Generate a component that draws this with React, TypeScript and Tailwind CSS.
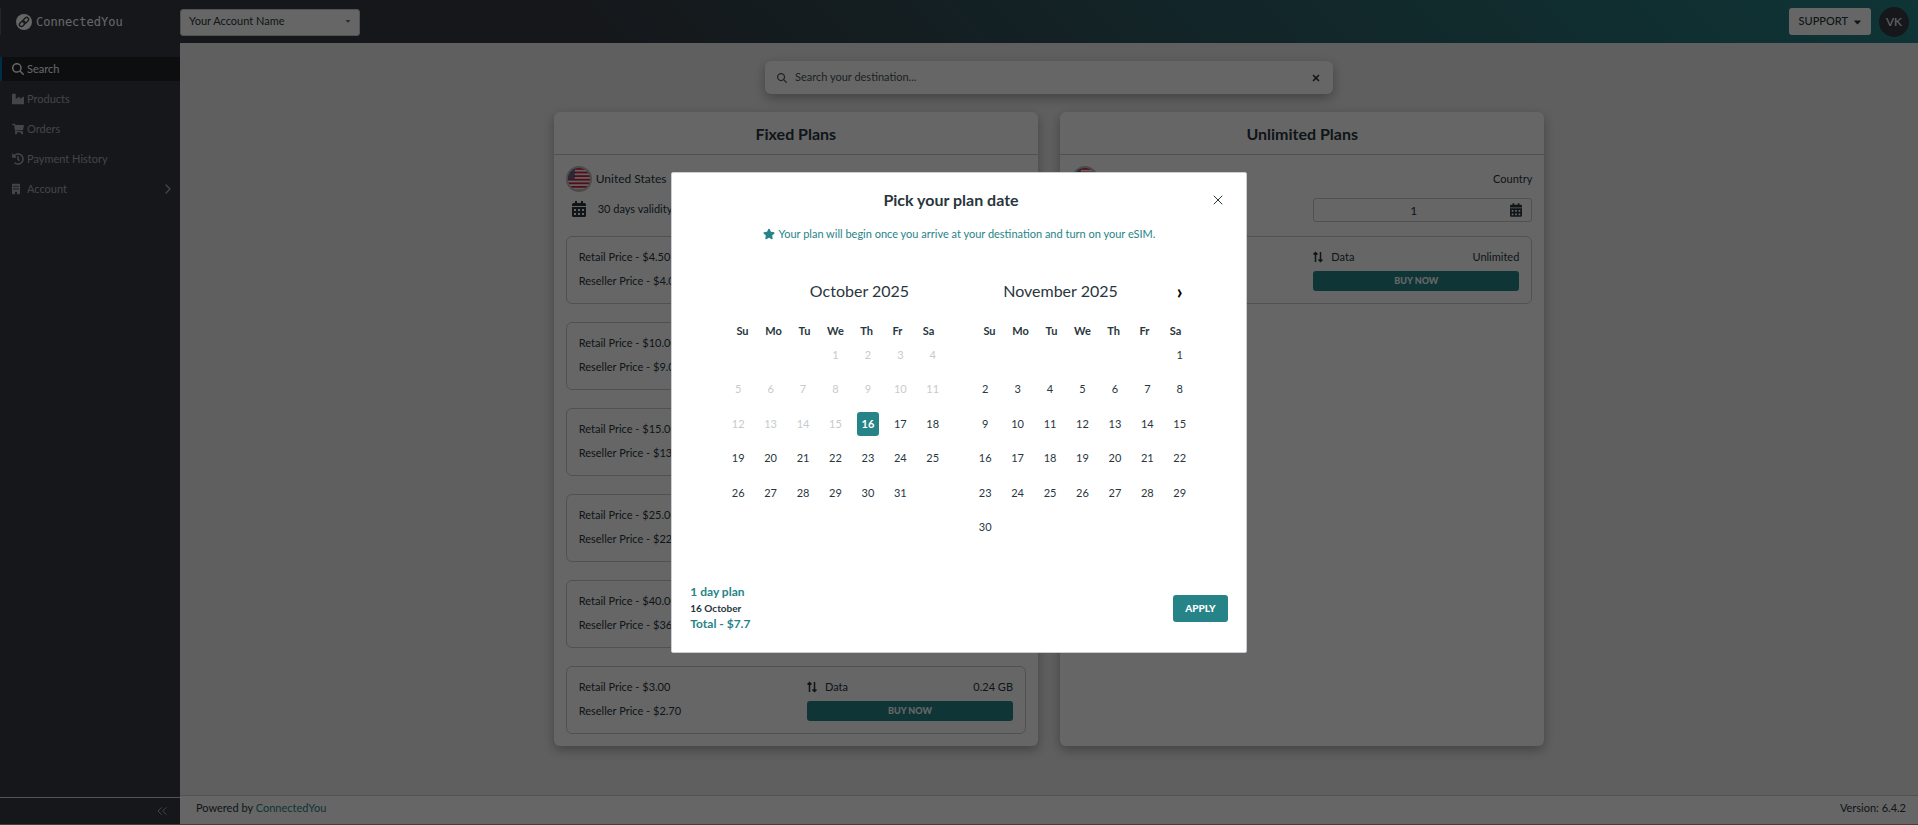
import { useState } from "react";
import { FaCaretDown, FaHistory, FaIndustry, FaShoppingCart, FaStar } from "react-icons/fa";
import { FaBuilding, FaMagnifyingGlass } from "react-icons/fa6";
import { ChevronRight, ChevronsLeft, X } from "lucide-react";
import clsx from "clsx";

const navItems = [
  { label: "Search", icon: FaMagnifyingGlass, active: true },
  { label: "Products", icon: FaIndustry },
  { label: "Orders", icon: FaShoppingCart },
  { label: "Payment History", icon: FaHistory },
  { label: "Account", icon: FaBuilding, expandable: true },
];

const fixedPlans = [
  { retail: "$4.50", reseller: "$4.05", data: "1 GB" },
  { retail: "$10.00", reseller: "$9.00", data: "3 GB" },
  { retail: "$15.00", reseller: "$13.50", data: "5 GB" },
  { retail: "$25.00", reseller: "$22.50", data: "10 GB" },
  { retail: "$40.00", reseller: "$36.00", data: "20 GB" },
  { retail: "$3.00", reseller: "$2.70", data: "0.24 GB" },
];

const weekDays = ["Su", "Mo", "Tu", "We", "Th", "Fr", "Sa"];

function Logo() {
  return (
    <svg viewBox="0 0 16 16" className="size-4" fill="none" aria-hidden="true">
      <circle cx="8" cy="8" r="8" fill="#fff" />
      <g transform="rotate(-45 8 8)" stroke="#363a43" strokeWidth="1.3">
        <rect x="2.3" y="6" width="6.4" height="4" rx="2" />
        <rect x="7.3" y="6" width="6.4" height="4" rx="2" />
      </g>
    </svg>
  );
}

function CalendarIcon({ className }: { className?: string }) {
  return (
    <svg viewBox="0 0 14 16" className={className} fill="currentColor" aria-hidden="true">
      <path
        fillRule="evenodd"
        d="M3 0h2v2h4V0h2v2h1.5A1.5 1.5 0 0 1 14 3.5V5H0V3.5A1.5 1.5 0 0 1 1.5 2H3zM0 6h14v8.500a1.500 1.500 0 0 1-1.500 1.500h-11A1.500 1.500 0 0 1 0 14.500zM2 8v2h2V8zm4 0v2h2V8zm4 0v2h2V8zM2 12v2h2v-2zm4 0v2h2v-2zm4 0v2h2v-2z"
      />
    </svg>
  );
}

function DataIcon() {
  return (
    <svg viewBox="0 0 10 12" className="h-3 w-2.5" fill="none" stroke="currentColor" strokeWidth="1.5" aria-hidden="true">
      <path d="M2.500 11V1.500M.5 3.500l2-2 2 2M7.500 1v9.500M5.500 8.500l2 2 2-2" />
    </svg>
  );
}

function UsFlag() {
  return (
    <svg viewBox="0 0 26 26" className="size-[26px] shrink-0" role="img" aria-label="United States flag">
      <defs>
        <clipPath id="flag">
          <circle cx="13" cy="13" r="11" />
        </clipPath>
      </defs>
      <circle cx="13" cy="13" r="13" fill="#bcbcbf" />
      <g clipPath="url(#flag)">
        <rect width="26" height="26" fill="#f4f4f4" />
        {[2, 5.6, 9.2, 12.8, 16.4, 20, 23.6].map((y) => (
          <rect key={y} y={y} width="26" height="1.8" fill="#d0223c" />
        ))}
        <rect width="8.500" height="13" fill="#33346b" />
        {[4, 6, 8, 10, 12].map((y) => (
          <path key={y} d={`M2.500 ${y}h5`} stroke="#f4f4f4" strokeDasharray="1 1" />
        ))}
      </g>
    </svg>
  );
}

function PlanBox({ retail, reseller, data }: { retail: string; reseller: string; data: string }) {
  return (
    <div className="grid h-[68px] grid-cols-[1fr_206px] gap-x-4 rounded-md border border-[#c8cacc] px-3 text-[11px] leading-4">
      <div className="flex flex-col gap-2 pt-3">
        <p>Retail Price - {retail}</p>
        <p>Reseller Price - {reseller}</p>
      </div>
      <div className="flex flex-col gap-1.5 pt-3">
        <div className="flex items-center">
          <DataIcon />
          <span className="ml-2">Data</span>
          <span className="ml-auto">{data}</span>
        </div>
        <button className="h-5 rounded-[3px] bg-[#268488] text-[9px] leading-4 font-black text-white">BUY NOW</button>
      </div>
    </div>
  );
}

interface MonthProps {
  title: string;
  titleClassName: string;
  offset: number;
  days: number;
  disabledUntil?: number;
  selected?: number;
  onSelect: (day: number) => void;
}

function Month({ title, titleClassName, offset, days, disabledUntil = 0, selected, onSelect }: MonthProps) {
  return (
    <section className="w-[227px]">
      <h3 className={clsx("text-center text-base leading-6", titleClassName)}>{title}</h3>
      <div className="mt-5 grid grid-cols-[repeat(7,31px)] justify-center text-center text-[11px] leading-4 font-bold">
        {weekDays.map((day) => (
          <span key={day}>{day}</span>
        ))}
      </div>
      <div className="grid h-[207px] grid-cols-7 grid-rows-6 justify-items-center text-[11px]">
        {Array.from({ length: offset }, (_, i) => (
          <span key={`empty-${i}`} />
        ))}
        {Array.from({ length: days }, (_, i) => i + 1).map((day) => (
          <button
            key={day}
            disabled={day <= disabledUntil}
            onClick={() => onSelect(day)}
            className={clsx(
              "mt-1 h-6 w-[22px] rounded-[3px]",
              day <= disabledUntil && "text-[#c8cacc]",
              day === selected && "bg-[#268488] font-bold text-white"
            )}
          >
            {day}
          </button>
        ))}
      </div>
    </section>
  );
}

function PlanDateDialog() {
  const [day, setDay] = useState(16);

  return (
    <div className="fixed inset-0 z-20 flex items-center justify-center bg-black/60">
      <div
        role="dialog"
        aria-modal="true"
        aria-labelledby="dialog-title"
        className="w-[30%] min-w-[560px] rounded-xs border border-[#c8ced3] bg-white text-[#29363d]"
      >
        <header className="flex items-center px-5 pt-[15px]">
          <h2 id="dialog-title" className="flex-1 text-center text-base leading-6 font-bold">
            Pick your plan date
          </h2>
          <button aria-label="Close">
            <X className="size-4" strokeWidth={1.5} />
          </button>
        </header>
        <p className="mt-3 flex items-center justify-center gap-1 text-[11px] leading-5 text-[#268488]">
          <FaStar className="size-3" />
          Your plan will begin once you arrive at your destination and turn on your eSIM.
        </p>
        <div className="relative mt-[35px] flex justify-center gap-5">
          <Month
            title="October 2025"
            titleClassName="pl-12"
            offset={3}
            days={31}
            disabledUntil={15}
            selected={day}
            onSelect={setDay}
          />
          <Month title="November 2025" titleClassName="pr-11" offset={6} days={30} onSelect={() => {}} />
          <button aria-label="Next month" className="absolute top-0 right-14 w-5 text-xl leading-6 font-bold text-black">
            ›
          </button>
        </div>
        <footer className="flex items-center justify-between px-[18px] pt-[38px] pb-5">
          <div className="font-bold">
            <p className="text-xs leading-4 text-[#268488]">1 day plan</p>
            <p className="text-[10px] leading-4">{day} October</p>
            <p className="text-xs leading-4 text-[#268488]">Total - $7.7</p>
          </div>
          <button className="h-[27px] rounded-[3px] bg-[#268488] px-3 text-[10px] font-black text-white">APPLY</button>
        </footer>
      </div>
    </div>
  );
}

export default function App() {
  return (
    <div className="flex min-h-screen flex-col border-b border-[#a0a0a0] bg-[#eeeeee] font-['Lato',sans-serif] text-[#29363d]">
      <header className="flex h-[43px] items-center bg-[linear-gradient(45deg,#363a43_30%,#268488)] pr-[9px]">
        <a href="#" className="flex h-[27px] w-[180px] items-center gap-1 border-l border-[#4d6468] pl-[15px] text-white">
          <Logo />
          <span className="font-['DejaVu_Sans_Mono',monospace] text-xs">ConnectedYou</span>
        </a>
        <div className="relative w-[180px]">
          <select
            aria-label="Account"
            className="h-[27px] w-full appearance-none rounded-[3px] border border-[#c8ced3] bg-white px-2 pb-0.5 text-[11px]"
          >
            <option>Your Account Name</option>
          </select>
          <FaCaretDown className="pointer-events-none absolute top-2.5 right-2 size-2 text-gray-500" />
        </div>
        <button className="ml-auto flex h-[27px] items-center gap-1.5 rounded-[3px] bg-white px-2.5 text-[11px] font-medium">
          SUPPORT
          <FaCaretDown className="h-3 w-[7px]" />
        </button>
        <button className="ml-2 size-[30px] rounded-full bg-[#363a43] text-xs text-white">VK</button>
      </header>

      <div className="flex flex-1">
        <aside className="flex w-[180px] shrink-0 flex-col bg-[#363a43] text-[11px]">
          <nav className="flex flex-col gap-1.5 pt-3.5">
            {navItems.map(({ label, icon: Icon, active, expandable }) => (
              <a
                key={label}
                href="#"
                className={clsx(
                  "flex h-6 items-center gap-[3px] border-l-2 pr-1 pl-2.5",
                  active ? "border-[#0072b1] bg-[#212326] text-white" : "border-transparent text-[#a9acb2]"
                )}
              >
                <Icon className={expandable ? "mr-1 h-3 w-2" : "size-3"} />
                {label}
                {expandable && <ChevronRight className="ml-auto size-4" />}
              </a>
            ))}
          </nav>
          <button
            aria-label="Collapse sidebar"
            className="mt-auto flex h-[27px] items-center justify-end border-t border-[#d0d0d0] pr-2.5 text-[#a9acb2]"
          >
            <ChevronsLeft className="size-4" strokeWidth={1.5} />
          </button>
        </aside>

        <div className="flex min-w-0 flex-1 flex-col">
          <main className="mx-auto flex w-[57%] min-w-[900px] flex-1 flex-col items-center pt-[18px]">
            <label className="flex h-[33px] w-[568px] items-center rounded-md bg-white px-3 shadow-[0_4px_12px_rgba(0,0,0,0.3)]">
              <FaMagnifyingGlass className="size-2.5 shrink-0 text-[#4a5359]" />
              <span className="sr-only">Destination</span>
              <input
                placeholder="Search your destination..."
                className="ml-2 flex-1 text-[11px] outline-none placeholder:text-[#4a5359]"
              />
              <button aria-label="Clear">
                <X className="size-2.5" strokeWidth={4} />
              </button>
            </label>

            <div className="mt-[18px] grid h-[634px] w-full grid-cols-2 gap-[22px]">
              <section className="rounded-md bg-white shadow-[0_4px_12px_rgba(0,0,0,0.3)]">
                <h2 className="border-b border-[#c8cacc] pt-2.5 pb-2 text-center text-base leading-6 font-bold">Fixed Plans</h2>
                <div className="px-3 pt-3">
                  <div className="flex h-6 items-center gap-1 text-xs">
                    <UsFlag />
                    United States
                  </div>
                  <div className="mt-1.5 flex h-6 items-center gap-3 pl-1.5 text-[11px]">
                    <CalendarIcon className="h-4 w-3.5" />
                    30 days validity
                  </div>
                  <div className="mt-[15px] flex flex-col gap-[18px]">
                    {fixedPlans.map((plan) => (
                      <PlanBox key={plan.retail} {...plan} />
                    ))}
                  </div>
                </div>
              </section>

              <section className="rounded-md bg-white shadow-[0_4px_12px_rgba(0,0,0,0.3)]">
                <h2 className="border-b border-[#c8cacc] pt-2.5 pb-2 text-center text-base leading-6 font-bold">Unlimited Plans</h2>
                <div className="px-3 pt-3">
                  <div className="flex h-6 items-center gap-1 text-xs">
                    <UsFlag />
                    United States
                    <span className="ml-auto text-[11px]">Country</span>
                  </div>
                  <div className="mt-[7px] flex justify-end">
                    <div className="relative w-[219px]">
                      <input
                        aria-label="Days"
                        defaultValue="1"
                        className="block h-6 w-full rounded-[3px] border border-[#c8cacc] pr-6 pl-1.5 text-center text-xs"
                      />
                      <CalendarIcon className="absolute top-[5px] right-2.5 h-3.5 w-3" />
                    </div>
                  </div>
                  <div className="mt-3.5">
                    <PlanBox retail="$8.50" reseller="$7.70" data="Unlimited" />
                  </div>
                </div>
              </section>
            </div>
          </main>

          <footer className="flex h-[29px] items-center justify-between border-t border-[#c8ced3] bg-white pr-3 pb-1 pl-4 text-[11px]">
            <p>
              Powered by{" "}
              <a href="#" className="text-[#268488]">
                ConnectedYou
              </a>
            </p>
            <p>Version: 6.4.2</p>
          </footer>
        </div>
      </div>

      <PlanDateDialog />
    </div>
  );
}
